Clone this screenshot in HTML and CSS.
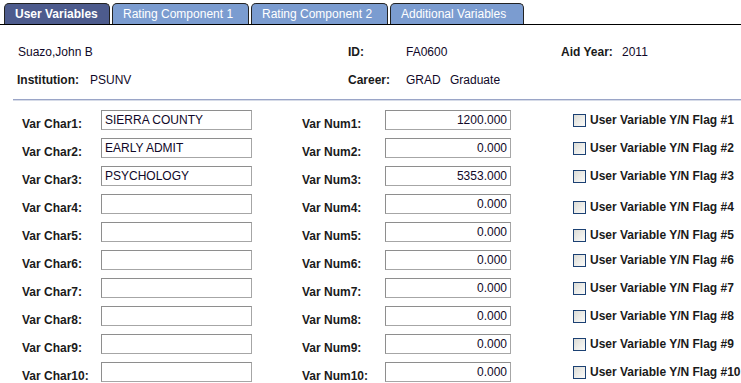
FILE: index.html
```html
<!DOCTYPE html>
<html lang="en">
<head>
  <meta charset="UTF-8" />
  <title>User Variables</title>
  <link rel="stylesheet" href="styles.css">
</head>
<body>
  <div class="tabs">
    <div class="tab active">User Variables</div>
    <div class="tab">Rating Component 1</div>
    <div class="tab">Rating Component 2</div>
    <div class="tab">Additional Variables</div>
  </div>

  <div class="header">
    <span class="val name">Suazo,John B</span>
    <span class="lbl">ID:</span>
    <span class="val">FA0600</span>
    <span class="lbl">Aid Year:</span>
    <span class="val">2011</span>

    <span class="lbl">Institution:</span>
    <span class="val">PSUNV</span>
    <span class="lbl">Career:</span>
    <span class="val">GRAD <span class="descr">Graduate</span></span>
  </div>

  <div class="rule"></div>

  <div class="form">
    <label class="lbl">Var Char1:</label><div class="box txt">SIERRA COUNTY</div>
    <label class="lbl">Var Num1:</label><div class="box num">1200.000</div>
    <label class="flag"><span class="chk"></span>User Variable Y/N Flag #1</label>

    <label class="lbl">Var Char2:</label><div class="box txt">EARLY ADMIT</div>
    <label class="lbl">Var Num2:</label><div class="box num">0.000</div>
    <label class="flag"><span class="chk"></span>User Variable Y/N Flag #2</label>

    <label class="lbl">Var Char3:</label><div class="box txt">PSYCHOLOGY</div>
    <label class="lbl">Var Num3:</label><div class="box num">5353.000</div>
    <label class="flag"><span class="chk"></span>User Variable Y/N Flag #3</label>

    <label class="lbl">Var Char4:</label><div class="box txt"></div>
    <label class="lbl">Var Num4:</label><div class="box num">0.000</div>
    <label class="flag low"><span class="chk"></span>User Variable Y/N Flag #4</label>

    <label class="lbl">Var Char5:</label><div class="box txt"></div>
    <label class="lbl">Var Num5:</label><div class="box num">0.000</div>
    <label class="flag low"><span class="chk"></span>User Variable Y/N Flag #5</label>

    <label class="lbl">Var Char6:</label><div class="box txt"></div>
    <label class="lbl">Var Num6:</label><div class="box num">0.000</div>
    <label class="flag"><span class="chk"></span>User Variable Y/N Flag #6</label>

    <label class="lbl">Var Char7:</label><div class="box txt"></div>
    <label class="lbl">Var Num7:</label><div class="box num">0.000</div>
    <label class="flag"><span class="chk"></span>User Variable Y/N Flag #7</label>

    <label class="lbl">Var Char8:</label><div class="box txt"></div>
    <label class="lbl">Var Num8:</label><div class="box num">0.000</div>
    <label class="flag"><span class="chk"></span>User Variable Y/N Flag #8</label>

    <label class="lbl">Var Char9:</label><div class="box txt"></div>
    <label class="lbl">Var Num9:</label><div class="box num">0.000</div>
    <label class="flag"><span class="chk"></span>User Variable Y/N Flag #9</label>

    <label class="lbl">Var Char10:</label><div class="box txt"></div>
    <label class="lbl">Var Num10:</label><div class="box num">0.000</div>
    <label class="flag"><span class="chk"></span>User Variable Y/N Flag #10</label>
  </div>
</body>
</html>
```

FILE: styles.css
```css
body {
  margin: 0;
  font-family: "Liberation Sans", Arial, sans-serif;
  font-size: 12px;
  color: #000;
  background: #fff;
}
.tabs {
  display: flex;
  gap: 2px;
  padding: 3px 0 0 4px;
  border-bottom: 1px solid #000;
  height: 21px;
}
.tab {
  box-sizing: border-box;
  height: 21px;
  padding: 3px 10px 0 10px;
  background: #7b9cd0;
  color: #fff;
  border: 1px solid #222;
  border-bottom: none;
  border-radius: 5px 5px 0 0;
  white-space: nowrap;
}
.tab:nth-child(2) { width: 137px; }
.tab:nth-child(3) { width: 137px; }
.tab:nth-child(4) { width: 134px; }
.tab.active {
  width: 106px;
  background: #4d5b8d;
  font-weight: bold;
}
.header {
  display: grid;
  grid-template-columns: 73px 258px 58px 155px 61px auto;
  row-gap: 14px;
  padding: 20px 0 0 17px;
  line-height: 14px;
}
.header .name { grid-column: 1 / 3; padding-left: 1px; }
.lbl {
  font-weight: bold;
  color: #1a1a1a;
}
.val {
  color: #100828;
}
.descr { margin-left: 6px; }
.rule {
  margin: 12px 0 0 13px;
  height: 0;
  border-top: 1px solid #9aa5c7;
  border-bottom: 1px solid #d6dbe8;
}
.form {
  display: grid;
  grid-template-columns: 79px 201px 83px 188px auto;
  grid-auto-rows: 28px;
  padding: 9px 0 0 22px;
}
.form .lbl {
  align-self: start;
  padding-top: 7px;
}
.box {
  box-sizing: border-box;
  height: 20px;
  border: 1px solid #a6a6a6;
  border-top-color: #8e8e8e;
  border-left-color: #8e8e8e;
  padding: 2px 3px 0 3px;
  color: #100828;
  white-space: nowrap;
}
.box.txt { width: 151px; }
.box.num { width: 126px; text-align: right; }
.flag {
  display: flex;
  align-items: center;
  gap: 4px;
  height: 14px;
  margin-top: 3px;
  font-weight: bold;
  color: #1a1a1a;
}
.flag.low { margin-top: 6px; }
.chk {
  box-sizing: border-box;
  width: 13px;
  height: 13px;
  border: 1px solid #1c4173;
  background: linear-gradient(135deg, #dcdcd6, #fbfbf9);
}
```
